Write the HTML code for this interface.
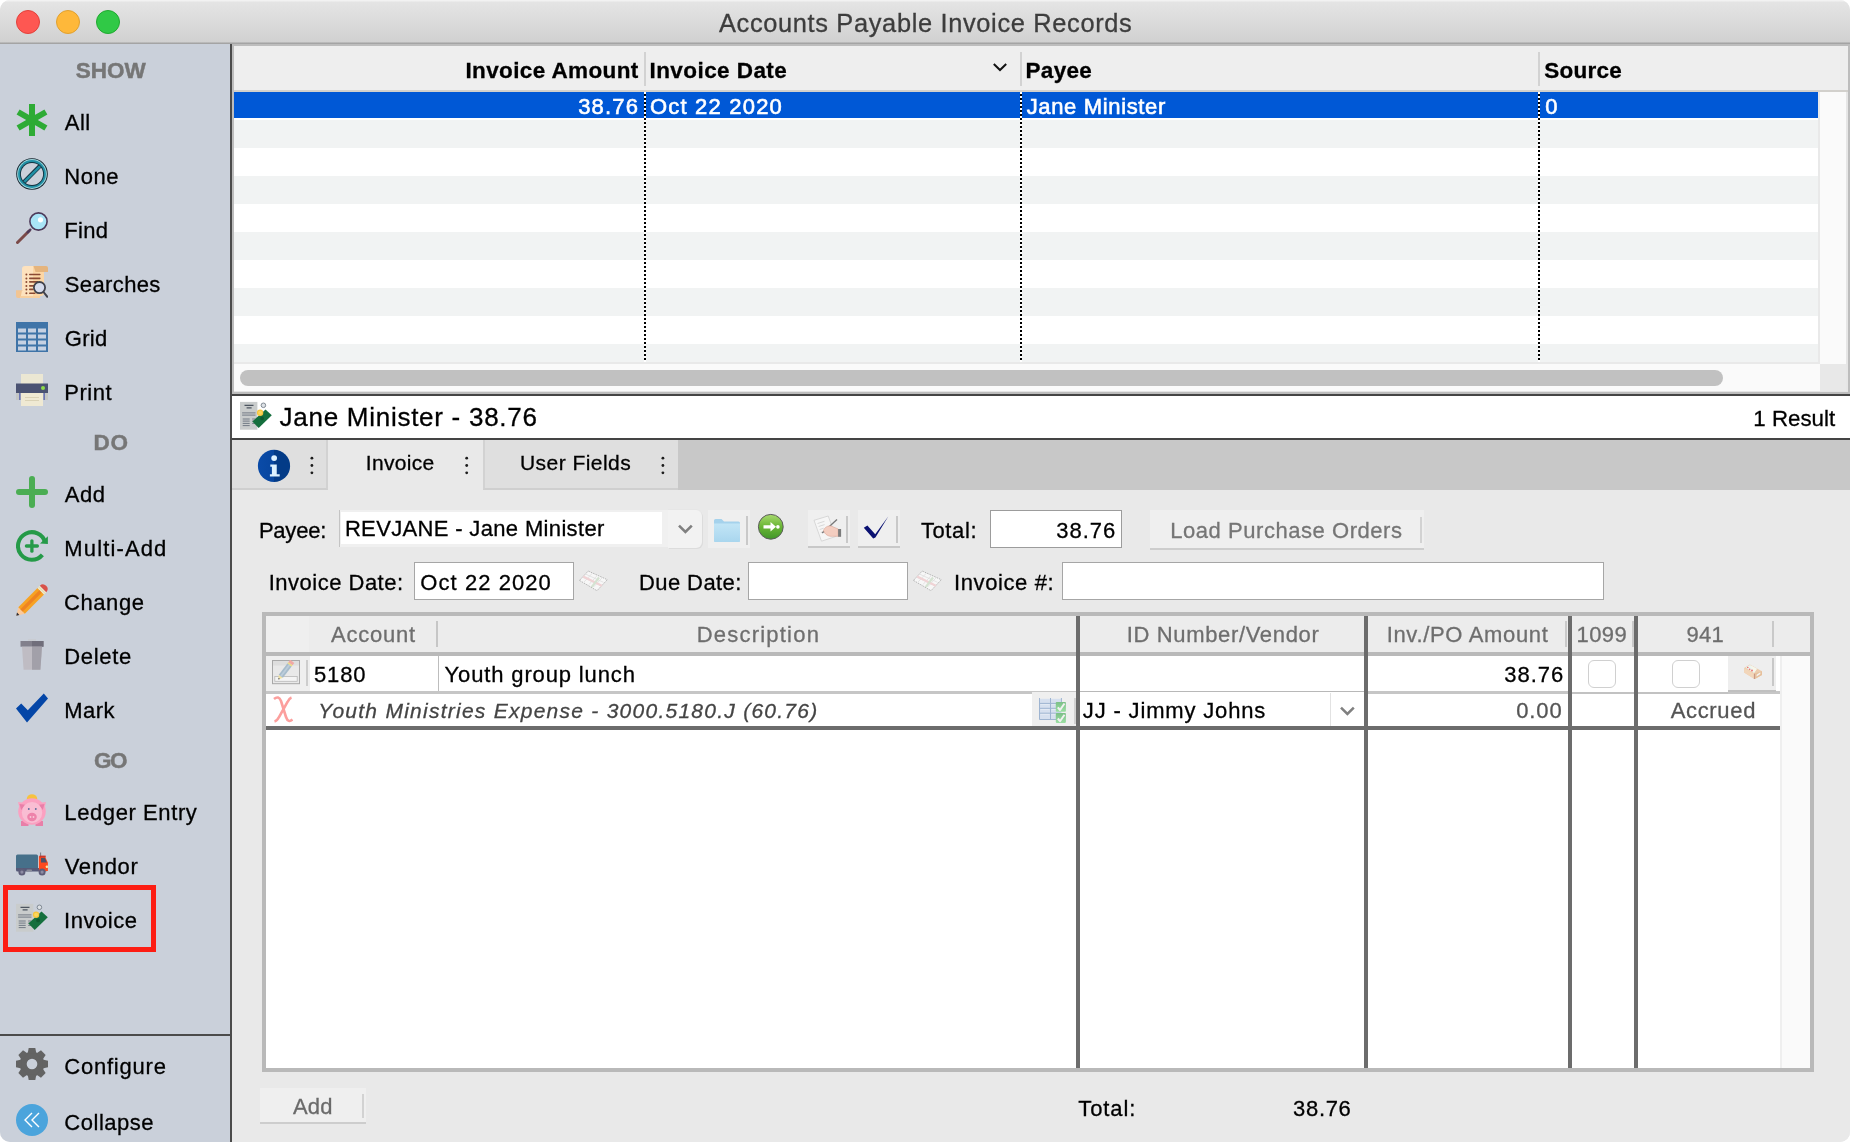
<!DOCTYPE html>
<html><head><meta charset="utf-8"><title>Accounts Payable Invoice Records</title>
<style>
*{box-sizing:border-box;margin:0;padding:0}
html,body{width:1850px;height:1142px;overflow:hidden;background:#fff}
body{font-family:"Liberation Sans",sans-serif;color:#000;position:relative}
.abs,.abs>*{position:absolute}
#win{position:absolute;left:0;top:0;width:1850px;height:1142px;border-radius:10px 10px 10px 10px;overflow:hidden;background:#e9e9e9}
#titlebar{left:0;top:0;width:1850px;height:44px;background:linear-gradient(#f6f6f6 0,#eeeeee 1px,#e4e4e4 2.500px,#d1d1d1 42px,#a2a2a2 43px,#a6a6a6 44px)}
#title{left:0;top:7px;width:1850px;text-align:center;font-size:25.4px;color:#3c3c3c;line-height:30px;white-space:nowrap}
.tl{width:24px;height:24px;border-radius:50%;top:10px}
#sidebar{left:0;top:44px;width:230px;height:1098px;background:#cad0da}
#sbborder{left:230px;top:44px;width:2px;height:1098px;background:#4b4b4b}
.sh{left:0;width:222px;text-align:center;font-weight:bold;font-size:21px;color:#7b7b7b;line-height:24px;height:24px;white-space:nowrap}
.si{left:64px;font-size:21.5px;line-height:26px;height:26px;white-space:nowrap;color:#000}
.ic{left:16px;width:32px;height:32px}
</style></head><body>
<div id="win" class="abs">
<div id="titlebar"></div>
<div class="tl" style="left:16px;background:#fe5752;border:1px solid #e2413b"></div>
<div class="tl" style="left:56px;background:#feb83a;border:1px solid #e0a02f"></div>
<div class="tl" style="left:96px;background:#30c946;border:1px solid #20a930"></div>
<div id="sidebar"></div>
<div id="sbborder"></div>

<svg class="ic" style="top:104px" viewBox="0 0 32 32"><g stroke="#2eab35" stroke-width="6" stroke-linecap="butt"><line x1="16" y1="0" x2="16" y2="32"/><line x1="2.1" y1="8" x2="29.9" y2="24"/><line x1="2.1" y1="24" x2="29.9" y2="8"/></g></svg>

<svg class="ic" style="top:158px" viewBox="0 0 32 32"><circle cx="16" cy="16" r="15.8" fill="#13222c"/><circle cx="16" cy="16" r="14.9" fill="#9fd6dd"/><circle cx="16" cy="16" r="13.9" fill="#2190a5"/><circle cx="16" cy="16" r="12" fill="#123240"/><circle cx="16" cy="16" r="11.1" fill="#cad0da"/><path d="M6.6 22.4 L22.4 6.6 L25.4 9.6 L9.6 25.4Z" fill="#123240"/><path d="M7.4 23 L23 7.4 L24.8 9.2 L9.2 24.8Z" fill="#2190a5"/></svg>

<svg class="ic" style="top:212px" viewBox="0 0 32 32"><line x1="1.5" y1="30.5" x2="13" y2="19" stroke="#7b4a48" stroke-width="3" stroke-linecap="round"/><line x1="11" y1="21" x2="15" y2="17" stroke="#4d3a5a" stroke-width="2.4"/><circle cx="22.5" cy="9.5" r="8.6" fill="#a9e4f6" stroke="#4d3a5a" stroke-width="1.6"/><circle cx="24.5" cy="7.8" r="2.6" fill="#fff"/></svg>

<svg class="ic" style="top:266px" viewBox="0 0 32 32"><path d="M9 0h19v26a4 4 0 0 1-4 4H6V3a3 3 0 0 1 3-3z" fill="#fde2be"/><path d="M17 0h11v26a4 4 0 0 1-4 4h-7z" fill="#fcd6a4"/><path d="M17.5 0H30a2 2 0 0 1 2 2v4H19.5z" fill="#e5b47d"/><path d="M0 24.3h7v7.7H2a2 2 0 0 1-2-2z" fill="#f2c593"/><path d="M6 24.5h2.5v4.5a3 3 0 0 1-3 3H4.5z" fill="#fde2be"/><path d="M5 30h19v2H5z" fill="#f7cf9f"/><g stroke="#8b4a33" stroke-width="1.6" stroke-linecap="round"><path d="M13.8 8.5h10M13.8 12.4h10M13.8 15.9h8M13.8 19.9h4M13.8 23.4h3M13.8 27.3h5"/></g><g fill="#8b4a33"><circle cx="10.4" cy="8.5" r="1"/><circle cx="10.4" cy="12.4" r="1"/><circle cx="10.4" cy="15.9" r="1"/><circle cx="10.4" cy="19.9" r="1"/><circle cx="10.4" cy="23.4" r="1"/><circle cx="10.4" cy="27.3" r="1"/></g><line x1="27.5" y1="26" x2="31.3" y2="30.8" stroke="#40424c" stroke-width="2" stroke-linecap="round"/><circle cx="23.5" cy="21.6" r="5.6" fill="#d5dbec" stroke="#40424c" stroke-width="1.8"/></svg>

<svg class="ic" style="top:322px;height:30px" viewBox="0 0 32 30"><rect width="32" height="30" fill="#3f74a8"/><g fill="#c6d1e2"><rect x="2" y="6.5" width="8" height="4"/><rect x="12" y="6.5" width="8" height="4"/><rect x="22" y="6.5" width="8" height="4"/><rect x="2" y="12.5" width="8" height="4"/><rect x="12" y="12.5" width="8" height="4"/><rect x="22" y="12.5" width="8" height="4"/><rect x="2" y="18.5" width="8" height="4"/><rect x="12" y="18.5" width="8" height="4"/><rect x="22" y="18.5" width="8" height="4"/><rect x="2" y="24.5" width="8" height="4"/><rect x="12" y="24.5" width="8" height="4"/><rect x="22" y="24.5" width="8" height="4"/></g></svg>

<svg class="ic" style="top:374px" viewBox="0 0 32 32"><rect x="5" y="0" width="22" height="11" fill="#ebe7d3"/><rect x="0" y="17" width="32" height="9" fill="#c4c6c4"/><rect x="3" y="17" width="1.6" height="9" fill="#6c76b4"/><rect x="27.4" y="17" width="1.6" height="9" fill="#6c76b4"/><rect x="0" y="9.5" width="32" height="9.5" fill="#4a5272"/><circle cx="27" cy="14" r="2" fill="#8edc4a"/><rect x="5" y="19" width="22" height="13" fill="#efe9d3"/><rect x="9" y="23" width="14" height="0.8" fill="#d5ccb0"/><rect x="9" y="26" width="14" height="0.8" fill="#d5ccb0"/></svg>

<svg class="ic" style="top:476px" viewBox="0 0 32 32"><g stroke="#4bad53" stroke-width="6" stroke-linecap="round"><line x1="16" y1="3" x2="16" y2="29"/><line x1="3" y1="16" x2="29" y2="16"/></g></svg>

<svg class="ic" style="top:530px" viewBox="0 0 32 32"><path d="M26.37 24.87 A13.8 13.8 0 1 1 29.13 12.43" fill="none" stroke="#259a48" stroke-width="4"/><path d="M31.9 6.3 L31.9 14.1 L24 13.4Z" fill="#259a48"/><g stroke="#259a48" stroke-width="3.3" stroke-linecap="round"><line x1="15.9" y1="10.8" x2="15.9" y2="21.2"/><line x1="10.4" y1="16" x2="21.4" y2="16"/></g></svg>

<svg class="ic" style="top:584px" viewBox="0 0 32 32"><path d="M0.3 31.7 L2.3 23.2 L8.8 29.7Z" fill="#fbc99a"/><path d="M0.3 31.7 L1 28.6 L3.4 31Z" fill="#2b2f3a"/><path d="M2.3 23.2 L21.5 4 L28 10.5 L8.8 29.7Z" fill="#f7a223"/><path d="M4.4 25.3 L23.6 6.1 L25.9 8.4 L6.7 27.6Z" fill="#ee8322"/><path d="M21.5 4 L23.8 1.7 L30.3 8.2 L28 10.5Z" fill="#efe9c9"/><path d="M22.6 2.9 L29.1 9.4" stroke="#d9cf9a" stroke-width="0.7"/><path d="M23.8 1.7 A4.6 4.6 0 0 1 30.3 8.2Z" fill="#d9524a"/></svg>

<svg class="ic" style="top:638px" viewBox="0 0 32 32"><path d="M12 1h8v2.5h-8z" fill="#c9ccd2"/><rect x="4.5" y="3" width="23" height="5.7" fill="#82808c"/><rect x="16" y="3" width="11.5" height="5.7" fill="#706e7b"/><path d="M6 8.7h20l-1.6 23h-16.8z" fill="#bfbcc3"/><path d="M16 8.7h10l-1.6 23H16z" fill="#a2a0a9"/></svg>

<svg class="ic" style="top:692px" viewBox="0 0 32 32"><path d="M0 16.5 L5.2 11.5 L11.8 18.2 L27.8 1.5 L32 6.5 L11 30.5Z" fill="#0446a7"/></svg>

<svg class="ic" style="top:794px" viewBox="0 0 32 32"><ellipse cx="16" cy="4.8" rx="5.2" ry="4.6" fill="#f6c23f"/><path d="M5 27h7.5v5H5z M19.5 27H27v5h-7.500z" fill="#e87fa8"/><ellipse cx="16" cy="17.5" rx="13.8" ry="13.2" fill="#fba1c1"/><path d="M2 8 L4.5 18 L11.5 9.5Z" fill="#fba1c1"/><path d="M30 8 L27.500 18 L20.500 9.500Z" fill="#fba1c1"/><path d="M3.5 10 L5.200 16 L9.500 10.800Z" fill="#e87fa8"/><path d="M28.500 10 L26.800 16 L22.500 10.800Z" fill="#e87fa8"/><ellipse cx="16" cy="18.500" rx="10.200" ry="10.500" fill="#f9bdd3"/><ellipse cx="16" cy="23" rx="4.800" ry="4.200" fill="#ee82aa"/><circle cx="14.500" cy="23" r="0.9" fill="#f9c9d9"/><circle cx="17.500" cy="23" r="0.9" fill="#f9c9d9"/><circle cx="12.800" cy="15" r="0.9" fill="#5a6a9a"/><circle cx="19.800" cy="15" r="0.9" fill="#5a6a9a"/></svg>

<svg class="ic" style="top:848px" viewBox="0 0 32 32"><rect x="24.200" y="4.500" width="0.9" height="4.500" fill="#70707c"/><rect x="0" y="6.400" width="22" height="15" rx="1.500" fill="#46708a"/><path d="M0 19.900h31v2a1.500 1.500 0 0 1-1.500 1.500h-28A1.500 1.500 0 0 1 0 21.900z" fill="#565a78"/><path d="M22.900 8.300h6l3 6.500v8.200h-9z" fill="#fc4a1e"/><path d="M23.500 7.600h6.200v1.800h-6.200z" fill="#c9362b"/><path d="M25 10h4l2 4.600h-6z" fill="#4c5169"/><rect x="29.800" y="17.500" width="2.200" height="2.600" rx="0.800" fill="#ffe9a0"/><rect x="10.500" y="21.500" width="5.500" height="2" rx="0.800" fill="#8a8c9a"/><circle cx="5.900" cy="24.100" r="3.500" fill="#5f5d78"/><circle cx="5.900" cy="24.100" r="1.600" fill="#8e8ca3"/><circle cx="26.100" cy="24.100" r="3.500" fill="#5f5d78"/><circle cx="26.100" cy="24.100" r="1.600" fill="#8e8ca3"/></svg>

<svg class="ic" style="top:902px" viewBox="0 0 32 32"><rect x="0" y="1.900" width="17.400" height="27.800" fill="#c9cccc"/><path d="M4.500 5.300h9M6.600 7.900h5" stroke="#4d5560" stroke-width="1.200"/><g stroke="#737b86" stroke-width="1"><path d="M2.100 12.900h13.400M2.100 15.100h13.400M2.700 19h7M2.700 21.100h7M2.700 23.400h7M2.700 25.600h7M12.200 19h3.300M12.200 21.100h3.300M12.200 23.400h3.300"/></g><path d="M12.400 21.600 L25.500 9.500 L31.800 15.300 L18.700 27.900Z" fill="#156f3d"/><circle cx="22.100" cy="18.400" r="1.900" fill="#0e5a2f"/><circle cx="20.100" cy="12.700" r="3.200" fill="#f7c53c"/><circle cx="20.100" cy="12.700" r="2" fill="#fbd75e"/><circle cx="23.400" cy="5.300" r="2.300" fill="#dde1e5" stroke="#76808a" stroke-width="0.900"/></svg>

<div style="left:3px;top:885px;width:153px;height:67px;border:5px solid #fd1d13"></div>
<div style="left:0;top:1034px;width:230px;height:2px;background:#4b4b4b"></div>

<svg class="ic" style="top:1048px" viewBox="0 0 32 32"><g fill="#636363"><circle cx="16" cy="16" r="12.300"/><path d="M11.600 5.500 L12.700 0 H19.300 L20.400 5.500Z" transform="rotate(0 16 16)"/><path d="M11.600 5.500 L12.700 0 H19.300 L20.400 5.500Z" transform="rotate(45 16 16)"/><path d="M11.600 5.500 L12.700 0 H19.300 L20.400 5.500Z" transform="rotate(90 16 16)"/><path d="M11.600 5.500 L12.700 0 H19.300 L20.400 5.500Z" transform="rotate(135 16 16)"/><path d="M11.600 5.500 L12.700 0 H19.300 L20.400 5.500Z" transform="rotate(180 16 16)"/><path d="M11.600 5.500 L12.700 0 H19.300 L20.400 5.500Z" transform="rotate(225 16 16)"/><path d="M11.600 5.500 L12.700 0 H19.300 L20.400 5.500Z" transform="rotate(270 16 16)"/><path d="M11.600 5.500 L12.700 0 H19.300 L20.400 5.500Z" transform="rotate(315 16 16)"/></g><circle cx="16" cy="16" r="5.300" fill="#cad0da"/></svg>

<svg class="ic" style="top:1104px" viewBox="0 0 32 32"><circle cx="16" cy="16" r="16" fill="#4ba4dc"/><path d="M16 9 L9 16 L16 23 M23 9 L16 16 L23 23" fill="none" stroke="#fff" stroke-width="1.4"/></svg>

<div style="left:232px;top:44px;width:1618px;height:350px;background:#bdbdbd"></div>
<div style="left:234px;top:46px;width:1614px;height:44px;background:#eeeeee"></div>
<div style="left:234px;top:90px;width:1614px;height:2px;background:#d2d0cc"></div>
<div style="left:234px;top:92px;width:1584px;height:270px;background:repeating-linear-gradient(#fff 0,#fff 28px,#f1f3f3 28px,#f1f3f3 56px)"></div>
<div style="left:234px;top:92px;width:1584px;height:26px;background:#0058d6"></div>
<div style="left:1818px;top:92px;width:2px;height:272px;background:#e9e9e9"></div>
<div style="left:1820px;top:92px;width:26px;height:272px;background:#fafafa"></div>
<div style="left:1846px;top:92px;width:2px;height:300px;background:#e6e6e6"></div>
<div style="left:234px;top:362px;width:1586px;height:2px;background:#e9e9e9"></div>
<div style="left:234px;top:364px;width:1586px;height:27px;background:#fafafa"></div>
<div style="left:1820px;top:364px;width:26px;height:27px;background:#e8e8e8"></div>
<div style="left:234px;top:391px;width:1614px;height:1px;background:#e4e4e4"></div>
<div style="left:240px;top:370px;width:1483px;height:16px;border-radius:8px;background:#c1c1c1"></div>
<div style="left:644px;top:52px;width:2px;height:34px;background:#d2d2d2"></div>
<div style="left:644px;top:92px;width:2px;height:270px;background:repeating-linear-gradient(#fff 0,#fff 2px,#000 2px,#000 4px)"></div>
<div style="left:1020px;top:52px;width:2px;height:34px;background:#d2d2d2"></div>
<div style="left:1020px;top:92px;width:2px;height:270px;background:repeating-linear-gradient(#fff 0,#fff 2px,#000 2px,#000 4px)"></div>
<div style="left:1538px;top:52px;width:2px;height:34px;background:#d2d2d2"></div>
<div style="left:1538px;top:92px;width:2px;height:270px;background:repeating-linear-gradient(#fff 0,#fff 2px,#000 2px,#000 4px)"></div>
<svg style="left:992px;top:62px;width:16px;height:10px" viewBox="0 0 16 10"><path d="M1.800 2 L8 8 L14.200 2" fill="none" stroke="#111" stroke-width="2"/></svg>
<div style="left:232px;top:394px;width:1618px;height:2px;background:#444;"></div>
<div style="left:232px;top:396px;width:1618px;height:42px;background:#fff;"></div>
<div style="left:232px;top:438px;width:1618px;height:2px;background:#444;"></div>
<svg style="left:240px;top:400px;width:32px;height:32px" viewBox="0 0 32 32"><rect x="0" y="1.900" width="17.400" height="27.800" fill="#c9cccc"/><path d="M4.500 5.300h9M6.600 7.900h5" stroke="#4d5560" stroke-width="1.200"/><g stroke="#737b86" stroke-width="1"><path d="M2.100 12.900h13.400M2.100 15.100h13.400M2.700 19h7M2.700 21.100h7M2.700 23.400h7M2.700 25.600h7M12.200 19h3.300M12.200 21.100h3.300M12.200 23.400h3.300"/></g><path d="M12.400 21.600 L25.500 9.500 L31.800 15.300 L18.700 27.900Z" fill="#156f3d"/><circle cx="22.100" cy="18.400" r="1.900" fill="#0e5a2f"/><circle cx="20.100" cy="12.700" r="3.200" fill="#f7c53c"/><circle cx="20.100" cy="12.700" r="2" fill="#fbd75e"/><circle cx="23.400" cy="5.300" r="2.300" fill="#dde1e5" stroke="#76808a" stroke-width="0.900"/></svg>
<div style="left:232px;top:440px;width:1618px;height:50px;background:#c8c8c8;"></div>
<div style="left:232px;top:440px;width:96px;height:50px;background:#dfdfdf;border-right:2px solid #d2d2d2;border-bottom:2px solid #cfcfcf"></div>
<div style="left:328px;top:440px;width:155px;height:51px;background:#e9e9e9;"></div>
<div style="left:483px;top:440px;width:195px;height:50px;background:#dfdfdf;border-left:2px solid #d2d2d2;border-bottom:2px solid #cfcfcf"></div>
<div style="left:232px;top:490px;width:1618px;height:652px;background:#e9e9e9;"></div>
<svg style="left:232px;top:440px;width:460px;height:50px" viewBox="232 440 460 50"><g fill="#1c1c1c"><circle cx="311.9" cy="458.2" r="1.400"/><circle cx="311.9" cy="465.5" r="1.400"/><circle cx="311.9" cy="472.8" r="1.400"/><circle cx="466.7" cy="458.2" r="1.400"/><circle cx="466.7" cy="465.5" r="1.400"/><circle cx="466.7" cy="472.8" r="1.400"/><circle cx="662.9" cy="458.2" r="1.400"/><circle cx="662.9" cy="465.5" r="1.400"/><circle cx="662.9" cy="472.8" r="1.400"/></g></svg>
<svg style="left:257px;top:449px;width:34px;height:34px" viewBox="0 0 34 34"><defs><linearGradient id="ig" x1="0" x2="1"><stop offset="0" stop-color="#0a4ba8"/><stop offset="0.500" stop-color="#07469f"/><stop offset="0.500" stop-color="#033b87"/><stop offset="1" stop-color="#033b87"/></linearGradient></defs><circle cx="17" cy="16.900" r="16.100" fill="url(#ig)"/><circle cx="17.150" cy="9.050" r="2.900" fill="#dcf1ff"/><path d="M13.300 15.500h6.450v9.800h2.950v2.200h-9.800v-2.200h2v-7.600h-1.600z" fill="#dcf1ff"/></svg>
<div style="left:339px;top:510px;width:329px;height:37px;background:#f0f0f0;border-left:1px solid #c4c4c4"></div>
<div style="left:341px;top:512px;width:321px;height:32px;background:#fff;"></div>
<div style="left:668px;top:510px;width:34px;height:38px;background:#f2f2f2;border-radius:0 6px 6px 0;box-shadow:1px 1px 0 0 #dcdcdc, 0 -1px 0 0 #e6e6e6"></div>
<svg style="left:677px;top:523px;width:17px;height:12px" viewBox="0 0 17 12"><path d="M2 2.6 L8.4 9 L14.8 2.6" fill="none" stroke="#808080" stroke-width="2.6"/></svg>
<div style="left:708px;top:510px;width:42px;height:38px;background:#efefef;"></div>
<div style="left:746px;top:516px;width:2px;height:29px;background:#c9c9c9;"></div>
<svg style="left:714px;top:519px;width:26px;height:23px" viewBox="0 0 26 23"><defs><linearGradient id="fg" x1="0" y1="0" x2="0" y2="1"><stop offset="0" stop-color="#c2e5f6"/><stop offset="1" stop-color="#a9d6ee"/></linearGradient></defs><path d="M0 1.500a1.500 1.500 0 0 1 1.500-1.500h6l2.500 2.500h14.500a1.500 1.500 0 0 1 1.500 1.500v17.500a1.500 1.500 0 0 1-1.500 1.500h-23a1.500 1.500 0 0 1-1.500-1.500z" fill="#a5d2ec"/><path d="M0 4.500h26v17a1.500 1.500 0 0 1-1.500 1.500h-23a1.500 1.500 0 0 1-1.500-1.500z" fill="url(#fg)"/></svg>
<svg style="left:757px;top:513px;width:28px;height:28px" viewBox="0 0 28 28"><defs><linearGradient id="gg" x1="0" y1="0" x2="0" y2="1"><stop offset="0" stop-color="#a8da6e"/><stop offset="0.500" stop-color="#69b535"/><stop offset="1" stop-color="#41962a"/></linearGradient></defs><circle cx="13.800" cy="13.800" r="12.400" fill="url(#gg)" stroke="#5c5c5c" stroke-width="1"/><path d="M6.500 12.200h7v-3.200l5.500 4.800-5.500 4.800v-3.200h-7z" fill="#fff"/><circle cx="20.900" cy="13.900" r="1.800" fill="#fff"/></svg>
<div style="left:808px;top:510px;width:42px;height:38px;background:#efefef;border-bottom:2px solid #c8c8c8"></div>
<div style="left:846px;top:516px;width:2px;height:27px;background:#c9c9c9;"></div>
<svg style="left:808px;top:510px;width:42px;height:38px" viewBox="808 510 42 38"><path d="M814 520.300 L828.200 516 L835.700 536.500 L821.500 541.200Z" fill="#f6f6f6" stroke="#d0d0d0" stroke-width="0.800"/><g stroke="#cfcfcf" stroke-width="0.800"><path d="M817.500 523.500l7-2.200M818.600 526.500l6-1.900M819.700 529.500l4-1.300M820.800 532.500l3-1"/></g><path d="M837 519.600 L822.200 533.100" stroke="#767676" stroke-width="1.300"/><path d="M823.500 530.500c1-3 4-5 7.500-4.500l7.200 3v7.300h-5.500c-4 0.500-8-1.800-9.200-5.800z" fill="#f3cdc0" stroke="#d9a595" stroke-width="0.600"/><rect x="838.100" y="529" width="3" height="7.800" fill="#7c7c7c"/></svg>
<div style="left:858px;top:510px;width:42px;height:38px;background:#efefef;border-bottom:2px solid #c8c8c8"></div>
<div style="left:896px;top:516px;width:2px;height:27px;background:#c9c9c9;"></div>
<svg style="left:858px;top:510px;width:42px;height:38px" viewBox="858 510 42 38"><path d="M863.800 527.700 L867.400 525.600 L875.200 534.300 L888.400 516.200 L875.400 537.600 L873.200 538.400Z" fill="#0a1172"/></svg>
<div style="left:990px;top:510px;width:132px;height:38px;background:#fff;border:1px solid #9c9c9c"></div>
<div style="left:1150px;top:510px;width:274px;height:40px;background:#efefef;border-bottom:2px solid #cdcdcd"></div>
<div style="left:1420px;top:517px;width:2px;height:26px;background:#d2d2d2;"></div>
<div style="left:414px;top:562px;width:160px;height:38px;background:#fff;border:1px solid #a6a6a6"></div>
<div style="left:748px;top:562px;width:160px;height:38px;background:#fff;border:1px solid #a6a6a6"></div>
<div style="left:1062px;top:562px;width:542px;height:38px;background:#fff;border:1px solid #a6a6a6"></div>
<svg style="left:579px;top:570px;width:30px;height:22px" viewBox="0 0 30 22"><path d="M0.500 10.400 L9.200 1 L28.300 9.700 L18 20.700Z" fill="#f7f7f7" stroke="#b5b5b5" stroke-width="1" stroke-dasharray="1.600 1"/><path d="M3.500 7.200 L21.500 15.400 M6.400 4 L24.500 12.300" stroke="#dedede" stroke-width="0.800"/><path d="M5 12 L13.500 3 M10 14.500 L18.500 5.200 M14.500 17 L23.500 7.400" stroke="#dedede" stroke-width="0.800"/><path d="M4.200 6.400 L22.800 15.800" stroke="#f0d3d5" stroke-width="2.200"/><path d="M20 7.500 L12.700 17.200" stroke="#d5e3d2" stroke-width="2.200"/></svg>
<svg style="left:913px;top:570px;width:30px;height:22px" viewBox="0 0 30 22"><path d="M0.500 10.400 L9.200 1 L28.300 9.700 L18 20.700Z" fill="#f7f7f7" stroke="#b5b5b5" stroke-width="1" stroke-dasharray="1.600 1"/><path d="M3.500 7.200 L21.500 15.400 M6.400 4 L24.500 12.300" stroke="#dedede" stroke-width="0.800"/><path d="M5 12 L13.500 3 M10 14.500 L18.500 5.200 M14.500 17 L23.500 7.400" stroke="#dedede" stroke-width="0.800"/><path d="M4.200 6.400 L22.800 15.800" stroke="#f0d3d5" stroke-width="2.200"/><path d="M20 7.500 L12.700 17.200" stroke="#d5e3d2" stroke-width="2.200"/></svg>
<div style="left:262px;top:612px;width:1552px;height:460px;background:#b9b9b9;"></div>
<div style="left:266px;top:616px;width:1544px;height:36px;background:#ececec;"></div>
<div style="left:266px;top:656px;width:1514px;height:412px;background:#fff;"></div>
<div style="left:1780px;top:656px;width:30px;height:412px;background:#fafafa;"></div>
<div style="left:1780px;top:656px;width:2px;height:412px;background:#efefef;"></div>
<div style="left:266px;top:616px;width:43px;height:36px;background:#efefef;"></div>
<div style="left:436px;top:621px;width:2px;height:26px;background:#c6c6c6;"></div>
<div style="left:1565px;top:621px;width:2px;height:26px;background:#c9c9c9;"></div>
<div style="left:1632px;top:621px;width:2px;height:26px;background:#c9c9c9;"></div>
<div style="left:1772px;top:621px;width:2px;height:26px;background:#c9c9c9;"></div>
<div style="left:266px;top:656px;width:44px;height:35px;background:#efefef;"></div>
<div style="left:306px;top:660px;width:2px;height:26px;background:#cdcdcd;"></div>
<div style="left:438px;top:656px;width:1px;height:35px;background:#bdbdbd;"></div>
<div style="left:266px;top:691px;width:1514px;height:3px;background:#c6c6c6;"></div>
<svg style="left:272px;top:660px;width:28px;height:26px" viewBox="0 0 28 26"><rect x="0.500" y="0.500" width="27" height="23.200" fill="#e9e9e9" stroke="#a8a8a8"/><rect x="1" y="1" width="26" height="4.500" fill="#dedede"/><rect x="2.800" y="16.500" width="22.400" height="4.800" fill="#f4f4f4" stroke="#b8b8b8" stroke-width="0.800"/><path d="M6.30 19.60 L6.78 14.68 L10.92 17.84Z" fill="#f3e3a2"/><path d="M6.30 19.60 L6.48 17.72 L8.07 18.94Z" fill="#555a66"/><path d="M6.78 14.68 L15.52 3.23 L19.66 6.39 L10.92 17.84Z" fill="#a7bccb"/><path d="M8.13 15.71 L16.87 4.27 L18.31 5.36 L9.56 16.81Z" fill="#bccddb"/><path d="M15.52 3.23 L16.31 2.20 L20.45 5.36 L19.66 6.39Z" fill="#efe07c"/><path d="M16.31 2.20 L18.19 -0.26 L22.33 2.89 L20.45 5.36Z" fill="#f0a9a4"/></svg>
<div style="left:1588px;top:660px;width:28px;height:28px;background:#fff;border:1px solid #d0d0d0;border-radius:6px"></div>
<div style="left:1672px;top:660px;width:28px;height:28px;background:#fff;border:1px solid #d0d0d0;border-radius:6px"></div>
<div style="left:1728px;top:656px;width:48px;height:36px;background:#eeeeee;border-bottom:2px solid #c0c0c0"></div>
<div style="left:1772px;top:658px;width:2px;height:28px;background:#c8c8c8;"></div>
<svg style="left:1740px;top:660px;width:26px;height:22px" viewBox="1740 660 26 22"><path d="M1744.100 668 L1749.900 664.500 L1762 671.200 L1762 675 L1754.800 679.100 L1744.100 672.600Z" fill="#eccdae"/><path d="M1744.100 668 L1754.100 673.600 L1754.100 679.100 L1744.100 672.600Z" fill="#f2d6ba"/><path d="M1754.100 673.600 L1762 671.200 L1762 675 L1754.800 679.100 L1754.100 679.100Z" fill="#e6c09c"/><path d="M1745.700 667.700 L1749.900 664.900 L1756.900 668.700 L1754.100 672.900Z" fill="#e9f6f3"/><path d="M1750.500 665.300 L1756.900 668.700 L1754.300 672.500 L1751.500 667.500Z" fill="#f7f6ea"/><circle cx="1747.800" cy="667.500" r="0.800" fill="#f06a6a"/><circle cx="1749.700" cy="669.200" r="0.800" fill="#f06a6a"/><circle cx="1752" cy="670.500" r="0.900" fill="#f06a6a"/><path d="M1754.400 673.800 V679" stroke="#c48f80" stroke-width="0.900"/><path d="M1756.600 674.800 L1760.300 672.300 L1760.300 673.900 L1756.600 676.500Z" fill="#f4f4f4"/></svg>
<svg style="left:273px;top:696px;width:20px;height:27px" viewBox="0 0 20 27"><g fill="none" stroke="#fc9f9d" stroke-width="2.600"><path d="M1 3 C4 0.5 6.5 1 8 5 L13 21 C14.5 25.5 17 26 19.5 23.5"/><path d="M18.5 1.5 C17 2 16 3 14.5 6 L6 21 C4.5 24 3.5 25 1.5 25.5"/></g></svg>
<div style="left:1032px;top:692px;width:44px;height:34px;background:#efefef;"></div>
<div style="left:1074px;top:698px;width:2px;height:26px;background:#d2d2d2;"></div>
<svg style="left:1036px;top:696px;width:32px;height:29px" viewBox="1036 696 32 29"><defs><linearGradient id="ck" x1="0" y1="0" x2="0" y2="1"><stop offset="0" stop-color="#7cbf88"/><stop offset="1" stop-color="#9adfa2"/></linearGradient></defs><rect x="1039" y="698.800" width="22.400" height="20.800" fill="#d6e0ef"/><g stroke="#9eb4d1" stroke-width="1" fill="none"><path d="M1039.500 698 V719.500 H1061 M1050.500 698 V719.500 M1061.400 698 V703 M1039 703.400 H1061.400 M1039 708.300 H1061.400 M1039 713.200 H1061.400"/></g><g stroke="#e9eef7" stroke-width="0.700"><path d="M1040.500 704.600 H1049.500 M1051.500 704.600 H1060.500 M1040.500 709.500 H1049.500 M1051.500 709.500 H1060.500 M1040.500 714.400 H1049.500 M1051.500 714.400 H1060.500"/></g><rect x="1055.800" y="701.900" width="10.100" height="9.800" rx="0.800" fill="url(#ck)"/><rect x="1055.800" y="713.100" width="10.100" height="9.800" rx="0.800" fill="url(#ck)"/><g fill="none" stroke="#f1f1f1" stroke-width="2" stroke-linejoin="round"><path d="M1057.800 707.300 L1060 710 L1064.500 703.500"/><path d="M1057.800 718.500 L1060 721.200 L1064.500 714.700"/></g></svg>
<div style="left:1080px;top:691px;width:284px;height:1px;background:#b8b8b8;"></div>
<div style="left:1080px;top:692px;width:284px;height:2px;background:#fff;"></div>
<div style="left:1330px;top:693px;width:1px;height:33px;background:#e2e2e2;"></div>
<div style="left:1572px;top:691px;width:156px;height:1px;background:#fff;"></div>
<div style="left:1572px;top:692px;width:156px;height:2px;background:#c2c2c2;"></div>
<svg style="left:1339px;top:705px;width:17px;height:12px" viewBox="0 0 17 12"><path d="M2 2.600 L8.400 9 L14.800 2.600" fill="none" stroke="#808080" stroke-width="2.500"/></svg>
<div style="left:266px;top:652px;width:1544px;height:4px;background:#b9b9b9;"></div>
<div style="left:266px;top:726px;width:1514px;height:4px;background:#6c6c6c;"></div>
<div style="left:1076px;top:616px;width:4px;height:452px;background:#6c6c6c;"></div>
<div style="left:1364px;top:616px;width:4px;height:452px;background:#6c6c6c;"></div>
<div style="left:1568px;top:616px;width:4px;height:452px;background:#6c6c6c;"></div>
<div style="left:1634px;top:616px;width:4px;height:452px;background:#6c6c6c;"></div>
<div style="left:260px;top:1088px;width:106px;height:36px;background:#efefef;border-bottom:2px solid #cdcdcd"></div>
<div style="left:362px;top:1094px;width:2px;height:24px;background:#d2d2d2;"></div>
<div id="txt" style="left:0;top:0;width:1850px;height:1142px;will-change:transform" class="abs">
<div style="left:718.95px;top:7.00px;font-size:25.4px;line-height:32px;height:32px;letter-spacing:0.660px;color:#3d3d3d;white-space:pre;-webkit-text-stroke:0.3px #3d3d3d;">Accounts Payable Invoice Records</div>
<div style="left:75.87px;top:56.00px;font-size:22.5px;line-height:29px;height:29px;letter-spacing:-0.048px;color:#767676;white-space:pre;font-weight:bold;-webkit-text-stroke:0.45px #767676;">SHOW</div>
<div style="left:93.52px;top:428.00px;font-size:22.5px;line-height:29px;height:29px;letter-spacing:0.680px;color:#767676;white-space:pre;font-weight:bold;-webkit-text-stroke:0.45px #767676;">DO</div>
<div style="left:94.08px;top:746.00px;font-size:22.5px;line-height:29px;height:29px;letter-spacing:-1.543px;color:#767676;white-space:pre;font-weight:bold;-webkit-text-stroke:0.45px #767676;">GO</div>
<div style="left:64.76px;top:108.00px;font-size:22px;line-height:29px;height:29px;letter-spacing:0.477px;color:#000;white-space:pre;-webkit-text-stroke:0.3px #000;">All</div>
<div style="left:64.30px;top:162.00px;font-size:22px;line-height:29px;height:29px;letter-spacing:0.564px;color:#000;white-space:pre;-webkit-text-stroke:0.3px #000;">None</div>
<div style="left:64.30px;top:216.00px;font-size:22px;line-height:29px;height:29px;letter-spacing:0.307px;color:#000;white-space:pre;-webkit-text-stroke:0.3px #000;">Find</div>
<div style="left:64.81px;top:270.00px;font-size:22px;line-height:29px;height:29px;letter-spacing:0.376px;color:#000;white-space:pre;-webkit-text-stroke:0.3px #000;">Searches</div>
<div style="left:64.70px;top:324.00px;font-size:22px;line-height:29px;height:29px;letter-spacing:0.350px;color:#000;white-space:pre;-webkit-text-stroke:0.3px #000;">Grid</div>
<div style="left:64.30px;top:378.00px;font-size:22px;line-height:29px;height:29px;letter-spacing:0.507px;color:#000;white-space:pre;-webkit-text-stroke:0.3px #000;">Print</div>
<div style="left:64.76px;top:480.00px;font-size:22px;line-height:29px;height:29px;letter-spacing:0.557px;color:#000;white-space:pre;-webkit-text-stroke:0.3px #000;">Add</div>
<div style="left:64.30px;top:534.00px;font-size:22px;line-height:29px;height:29px;letter-spacing:1.136px;color:#000;white-space:pre;-webkit-text-stroke:0.3px #000;">Multi-Add</div>
<div style="left:64.00px;top:588.00px;font-size:22px;line-height:29px;height:29px;letter-spacing:0.580px;color:#000;white-space:pre;-webkit-text-stroke:0.3px #000;">Change</div>
<div style="left:64.30px;top:642.00px;font-size:22px;line-height:29px;height:29px;letter-spacing:0.658px;color:#000;white-space:pre;-webkit-text-stroke:0.3px #000;">Delete</div>
<div style="left:64.30px;top:696.00px;font-size:22px;line-height:29px;height:29px;letter-spacing:0.459px;color:#000;white-space:pre;-webkit-text-stroke:0.3px #000;">Mark</div>
<div style="left:64.30px;top:798.00px;font-size:22px;line-height:29px;height:29px;letter-spacing:0.598px;color:#000;white-space:pre;-webkit-text-stroke:0.3px #000;">Ledger Entry</div>
<div style="left:64.71px;top:852.00px;font-size:22px;line-height:29px;height:29px;letter-spacing:0.664px;color:#000;white-space:pre;-webkit-text-stroke:0.3px #000;">Vendor</div>
<div style="left:64.08px;top:906.00px;font-size:22px;line-height:29px;height:29px;letter-spacing:0.533px;color:#000;white-space:pre;-webkit-text-stroke:0.3px #000;">Invoice</div>
<div style="left:64.30px;top:1052.00px;font-size:22px;line-height:29px;height:29px;letter-spacing:0.772px;color:#000;white-space:pre;-webkit-text-stroke:0.3px #000;">Configure</div>
<div style="left:64.30px;top:1108.00px;font-size:22px;line-height:29px;height:29px;letter-spacing:0.524px;color:#000;white-space:pre;-webkit-text-stroke:0.3px #000;">Collapse</div>
<div style="left:465.51px;top:56.00px;font-size:22.5px;line-height:29px;height:29px;letter-spacing:0.372px;color:#000;white-space:pre;font-weight:bold;-webkit-text-stroke:0.3px #000;">Invoice Amount</div>
<div style="left:649.51px;top:56.00px;font-size:22.5px;line-height:29px;height:29px;letter-spacing:0.428px;color:#000;white-space:pre;font-weight:bold;-webkit-text-stroke:0.3px #000;">Invoice Date</div>
<div style="left:1025.52px;top:56.00px;font-size:22.5px;line-height:29px;height:29px;letter-spacing:0.301px;color:#000;white-space:pre;font-weight:bold;-webkit-text-stroke:0.3px #000;">Payee</div>
<div style="left:1544.37px;top:56.00px;font-size:22.5px;line-height:29px;height:29px;letter-spacing:0.224px;color:#000;white-space:pre;font-weight:bold;-webkit-text-stroke:0.3px #000;">Source</div>
<div style="left:578.16px;top:92.00px;font-size:22px;line-height:29px;height:29px;letter-spacing:1.184px;color:#fff;white-space:pre;-webkit-text-stroke:0.6px #fff;">38.76</div>
<div style="left:649.97px;top:92.00px;font-size:22px;line-height:29px;height:29px;letter-spacing:1.201px;color:#fff;white-space:pre;-webkit-text-stroke:0.6px #fff;">Oct 22 2020</div>
<div style="left:1026.67px;top:92.00px;font-size:22px;line-height:29px;height:29px;letter-spacing:0.654px;color:#fff;white-space:pre;-webkit-text-stroke:0.6px #fff;">Jane Minister</div>
<div style="left:1545.14px;top:92.00px;font-size:22px;line-height:29px;height:29px;letter-spacing:0.000px;color:#fff;white-space:pre;-webkit-text-stroke:0.6px #fff;">0</div>
<div style="left:279.61px;top:400.00px;font-size:26px;line-height:34px;height:34px;letter-spacing:0.726px;color:#000;white-space:pre;-webkit-text-stroke:0.3px #000;">Jane Minister - 38.76</div>
<div style="left:1753.31px;top:404.00px;font-size:22.3px;line-height:29px;height:29px;letter-spacing:0.005px;color:#000;white-space:pre;-webkit-text-stroke:0.3px #000;">1 Result</div>
<div style="left:365.77px;top:449.00px;font-size:21px;line-height:27px;height:27px;letter-spacing:0.321px;color:#000;white-space:pre;-webkit-text-stroke:0.3px #000;">Invoice</div>
<div style="left:519.98px;top:449.00px;font-size:21px;line-height:27px;height:27px;letter-spacing:0.458px;color:#000;white-space:pre;-webkit-text-stroke:0.3px #000;">User Fields</div>
<div style="left:258.90px;top:516.00px;font-size:22px;line-height:29px;height:29px;letter-spacing:-0.216px;color:#000;white-space:pre;-webkit-text-stroke:0.3px #000;">Payee:</div>
<div style="left:344.90px;top:514.00px;font-size:22px;line-height:29px;height:29px;letter-spacing:0.345px;color:#000;white-space:pre;-webkit-text-stroke:0.3px #000;">REVJANE - Jane Minister</div>
<div style="left:920.92px;top:516.00px;font-size:22px;line-height:29px;height:29px;letter-spacing:0.601px;color:#000;white-space:pre;-webkit-text-stroke:0.3px #000;">Total:</div>
<div style="left:1056.26px;top:516.00px;font-size:22px;line-height:29px;height:29px;letter-spacing:1.010px;color:#000;white-space:pre;-webkit-text-stroke:0.3px #000;">38.76</div>
<div style="left:1170.20px;top:516.00px;font-size:22px;line-height:29px;height:29px;letter-spacing:0.550px;color:#757575;white-space:pre;-webkit-text-stroke:0.3px #757575;">Load Purchase Orders</div>
<div style="left:268.68px;top:568.00px;font-size:22px;line-height:29px;height:29px;letter-spacing:0.501px;color:#000;white-space:pre;-webkit-text-stroke:0.3px #000;">Invoice Date:</div>
<div style="left:420.27px;top:568.00px;font-size:22px;line-height:29px;height:29px;letter-spacing:1.071px;color:#000;white-space:pre;-webkit-text-stroke:0.3px #000;">Oct 22 2020</div>
<div style="left:639.00px;top:568.00px;font-size:22px;line-height:29px;height:29px;letter-spacing:0.405px;color:#000;white-space:pre;-webkit-text-stroke:0.3px #000;">Due Date:</div>
<div style="left:953.98px;top:568.00px;font-size:22px;line-height:29px;height:29px;letter-spacing:0.607px;color:#000;white-space:pre;-webkit-text-stroke:0.3px #000;">Invoice #:</div>
<div style="left:330.96px;top:620.00px;font-size:22px;line-height:29px;height:29px;letter-spacing:0.785px;color:#6e6e6e;white-space:pre;-webkit-text-stroke:0.3px #6e6e6e;">Account</div>
<div style="left:696.70px;top:620.00px;font-size:22px;line-height:29px;height:29px;letter-spacing:1.217px;color:#6e6e6e;white-space:pre;-webkit-text-stroke:0.3px #6e6e6e;">Description</div>
<div style="left:1126.68px;top:620.00px;font-size:22px;line-height:29px;height:29px;letter-spacing:0.658px;color:#6e6e6e;white-space:pre;-webkit-text-stroke:0.3px #6e6e6e;">ID Number/Vendor</div>
<div style="left:1386.68px;top:620.00px;font-size:22px;line-height:29px;height:29px;letter-spacing:0.672px;color:#6e6e6e;white-space:pre;-webkit-text-stroke:0.3px #6e6e6e;">Inv./PO Amount</div>
<div style="left:1576.53px;top:620.00px;font-size:22px;line-height:29px;height:29px;letter-spacing:0.393px;color:#6e6e6e;white-space:pre;-webkit-text-stroke:0.3px #6e6e6e;">1099</div>
<div style="left:1686.39px;top:620.00px;font-size:22px;line-height:29px;height:29px;letter-spacing:0.286px;color:#6e6e6e;white-space:pre;-webkit-text-stroke:0.3px #6e6e6e;">941</div>
<div style="left:313.92px;top:660.00px;font-size:22px;line-height:29px;height:29px;letter-spacing:0.896px;color:#000;white-space:pre;-webkit-text-stroke:0.3px #000;">5180</div>
<div style="left:444.52px;top:660.00px;font-size:22px;line-height:29px;height:29px;letter-spacing:0.865px;color:#000;white-space:pre;-webkit-text-stroke:0.3px #000;">Youth group lunch</div>
<div style="left:1504.16px;top:660.00px;font-size:22px;line-height:29px;height:29px;letter-spacing:1.035px;color:#000;white-space:pre;-webkit-text-stroke:0.3px #000;">38.76</div>
<div style="left:318.32px;top:697.00px;font-size:21px;line-height:27px;height:27px;letter-spacing:1.255px;color:#444;white-space:pre;-webkit-text-stroke:0.3px #444;font-style:italic;">Youth Ministries Expense - 3000.5180.J (60.76)</div>
<div style="left:1082.87px;top:696.00px;font-size:22px;line-height:29px;height:29px;letter-spacing:0.834px;color:#000;white-space:pre;-webkit-text-stroke:0.3px #000;">JJ - Jimmy Johns</div>
<div style="left:1516.14px;top:696.00px;font-size:22px;line-height:29px;height:29px;letter-spacing:0.894px;color:#555;white-space:pre;-webkit-text-stroke:0.3px #555;">0.00</div>
<div style="left:1670.66px;top:696.00px;font-size:22px;line-height:29px;height:29px;letter-spacing:0.676px;color:#555;white-space:pre;-webkit-text-stroke:0.3px #555;">Accrued</div>
<div style="left:292.96px;top:1092.00px;font-size:22px;line-height:29px;height:29px;letter-spacing:0.207px;color:#6a6a6a;white-space:pre;-webkit-text-stroke:0.3px #6a6a6a;">Add</div>
<div style="left:1078.32px;top:1094.00px;font-size:22px;line-height:29px;height:29px;letter-spacing:0.881px;color:#000;white-space:pre;-webkit-text-stroke:0.3px #000;">Total:</div>
<div style="left:1293.06px;top:1094.00px;font-size:22px;line-height:29px;height:29px;letter-spacing:0.684px;color:#000;white-space:pre;-webkit-text-stroke:0.3px #000;">38.76</div>
</div>

</div>
</body></html>
